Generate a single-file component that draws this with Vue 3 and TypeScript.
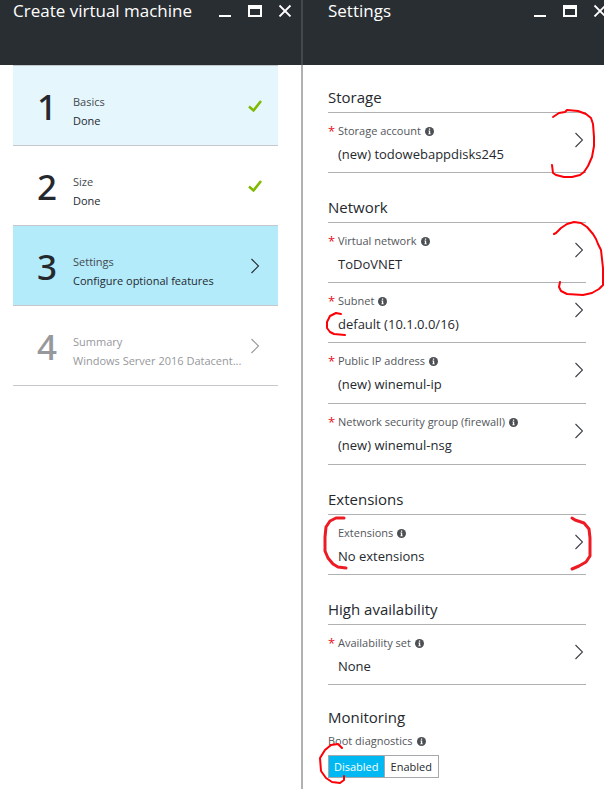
<script setup lang="ts">
import { ref } from 'vue'

interface Step {
  id: number
  title: string
  detail: string
  state: 'done' | 'active' | 'pending'
}

interface Field {
  label: string
  value: string
  required: boolean
  roomy?: boolean
}

interface Section {
  title: string
  fields: Field[]
}

const steps: Step[] = [
  { id: 1, title: 'Basics', detail: 'Done', state: 'done' },
  { id: 2, title: 'Size', detail: 'Done', state: 'done' },
  { id: 3, title: 'Settings', detail: 'Configure optional features', state: 'active' },
  { id: 4, title: 'Summary', detail: 'Windows Server 2016 Datacent...', state: 'pending' },
]

const sections: Section[] = [
  {
    title: 'Storage',
    fields: [{ label: 'Storage account', value: '(new) todowebappdisks245', required: true }],
  },
  {
    title: 'Network',
    fields: [
      { label: 'Virtual network', value: 'ToDoVNET', required: true },
      { label: 'Subnet', value: 'default (10.1.0.0/16)', required: true },
      { label: 'Public IP address', value: '(new) winemul-ip', required: true, roomy: true },
      { label: 'Network security group (firewall)', value: '(new) winemul-nsg', required: true, roomy: true },
    ],
  },
  {
    title: 'Extensions',
    fields: [{ label: 'Extensions', value: 'No extensions', required: false }],
  },
  {
    title: 'High availability',
    fields: [{ label: 'Availability set', value: 'None', required: true }],
  },
]

const blades = ['Create virtual machine', 'Settings']
const highlighted = ref(1)
const diagnostics = ref('Disabled')
</script>

<template>
  <main class="portal">
    <section v-for="(blade, index) in blades" :key="blade" class="blade">
      <header class="blade-header">
        <h1>{{ blade }}</h1>
        <div class="window-buttons">
          <button type="button" aria-label="Minimize">
            <svg width="14" height="14" viewBox="0 0 14 14"><path d="M1 13h12" stroke="#fff" stroke-width="2" /></svg>
          </button>
          <button type="button" aria-label="Maximize">
            <svg width="14" height="14" viewBox="0 0 14 14"><path fill="#fff" fill-rule="evenodd" d="M0 2h14v12H0zM2 6v6h10V6z" /></svg>
          </button>
          <button type="button" aria-label="Close">
            <svg width="14" height="14" viewBox="0 0 14 14"><path d="M1.5 2.5l11 11M12.5 2.5l-11 11" stroke="#fff" stroke-width="1.8" /></svg>
          </button>
        </div>
      </header>

      <ol v-if="index === 0" class="steps">
        <li v-for="step in steps" :key="step.id">
          <button
            type="button"
            class="step"
            :class="[step.state, { first: step.id === highlighted }]"
            :disabled="step.state === 'pending'"
          >
            <span class="number">{{ step.id }}</span>
            <span class="step-text">
              <span class="step-title">{{ step.title }}</span>
              <span class="step-detail">{{ step.detail }}</span>
            </span>
            <svg v-if="step.state === 'done'" class="mark" width="14" height="14" viewBox="0 0 14 14">
              <path d="M1 7.5l4.5 4 7.5-9.500" fill="none" stroke="#7fba00" stroke-width="2.5" />
            </svg>
            <svg v-else class="mark" width="14" height="16" viewBox="0 0 14 16">
              <path d="M3.500 1l7 7-7 7" fill="none" stroke="currentColor" stroke-width="1.1" />
            </svg>
          </button>
        </li>
      </ol>

      <div v-else class="settings">
        <section v-for="section in sections" :key="section.title">
          <h2>{{ section.title }}</h2>
          <button
            v-for="field in section.fields"
            :key="field.label"
            type="button"
            class="field"
            :class="{ roomy: field.roomy }"
          >
            <span class="star">{{ field.required ? '*' : '' }}</span>
            <span class="field-text">
              <span class="label">
                {{ field.label }}
                <svg class="info" width="9" height="9" viewBox="0 0 9 9">
                  <circle cx="4.5" cy="4.5" r="4.5" fill="#4c4f53" />
                  <path d="M3.9 1.5h1.3v1.2H3.9zM3.5 3.6h1.7v2.9h.6v.8H3.3v-.8h.6V4.4h-.4z" fill="#fff" />
                </svg>
              </span>
              <span class="value">{{ field.value }}</span>
            </span>
            <svg class="chevron" width="8" height="16" viewBox="0 0 8 16">
              <path d="M.5 1l7 7-7 7" fill="none" stroke="currentColor" stroke-width="1.1" />
            </svg>
          </button>
        </section>

        <section>
          <h2 class="plain">Monitoring</h2>
          <fieldset>
            <legend class="label">
              Boot diagnostics
              <svg class="info" width="9" height="9" viewBox="0 0 9 9">
                <circle cx="4.5" cy="4.5" r="4.5" fill="#4c4f53" />
                <path d="M3.9 1.5h1.3v1.2H3.9zM3.5 3.6h1.7v2.9h.6v.8H3.3v-.8h.6V4.4h-.4z" fill="#fff" />
              </svg>
            </legend>
            <div class="toggle">
              <label v-for="option in ['Disabled', 'Enabled']" :key="option" :class="{ on: diagnostics === option }">
                <input v-model="diagnostics" type="radio" name="diagnostics" :value="option" />{{ option }}
              </label>
            </div>
          </fieldset>
        </section>
      </div>
    </section>

    <svg class="ink" width="604" height="789" viewBox="0 0 604 789" aria-hidden="true">
      <g fill="none" stroke="#fb0007" stroke-width="2" stroke-linecap="round" stroke-linejoin="round">
        <path d="M553 117l6-4 6-1 2-2 11 1 8 3 5 4 2 6 1 13 0 9-2 11-4 9-4 6-4 3-8 2-8 0-8-2-3-2-1-8" />
        <path d="M554 234l2-1 5-5 6-4 7-2 7 1 6 4 6 7 3 5 2 5 3 6 2 18v17l-4 4-7 4-9 2-16-1-6-3-2-4 1-5" />
        <path d="M341 314l-5-1-6 3-3 6v6l3 4 4 2 11 1" />
        <path d="M342 748l-4-4-7 1-6 5-5 8 1 13 5 7 6 4 8 1 4-3 0-4" />
      </g>
      <g fill="none" stroke="#ed1c24" stroke-width="3" stroke-linecap="round" stroke-linejoin="round">
        <path d="M344 518h-8l-6 3-4 6-1 10 0 14 3 7 5 6 5 3 8 1" />
        <path d="M572 518l3 2 9 3 5 6 1 9v18l-4 6-7 4-7 3" />
      </g>
    </svg>
  </main>
</template>

<style>
body {
  overflow: hidden;
}
</style>

<style scoped>
.portal {
  position: relative;
  display: grid;
  grid-template-columns: 303px minmax(314px, 1fr);
  min-height: 100vh;
  overflow: hidden;
  background: #fff;
  color: #25292e;
  font-family: 'Segoe UI', 'Open Sans', 'Noto Sans', sans-serif;
  font-size: 11px;
}

.blade:first-child {
  box-shadow: inset -2px 0 #b1b1b3;
}

.blade-header {
  display: flex;
  justify-content: space-between;
  height: 65px;
  padding: 0 10px 0 25px;
  box-sizing: border-box;
  background: #292e33;
  color: #fff;
}

.blade:first-child .blade-header {
  padding: 0 9px 0 13px;
  border-right: 2px solid #44494d;
}

h1 {
  margin: 0;
  font-size: 17px;
  font-weight: 400;
  line-height: 22px;
}

.window-buttons {
  display: flex;
  gap: 16px;
  height: 16px;
  padding-top: 2px;
}

button {
  margin: 0;
  padding: 0;
  border: 0;
  background: none;
  color: inherit;
  font: inherit;
  text-align: left;
}

svg {
  display: block;
  flex: none;
}

.steps {
  margin: 0 25px 0 13px;
  padding: 0;
  list-style: none;
  border-top: 1px solid #c3c8cc;
}

.step {
  display: flex;
  align-items: center;
  width: 100%;
  height: 80px;
  padding: 0 16px 0 24px;
  box-sizing: border-box;
  border-bottom: 1px solid #c6c8cc;
}

.step.first {
  background: #e5f6fd;
}

.step.active {
  background: #b3ebfb;
}

.step.pending {
  color: #96989c;
}

.number {
  width: 36px;
  padding-top: 2px;
  font-family: 'Segoe UI', 'Noto Sans', 'Open Sans', sans-serif;
  font-size: 35px;
  font-weight: 500;
  line-height: 48px;
}

.step-text {
  display: flex;
  flex: 1;
  flex-direction: column;
  min-width: 0;
  padding-top: 10px;
  line-height: 19px;
  white-space: nowrap;
}

.step:not(.pending) .step-title {
  color: #45494e;
}

.settings {
  display: flex;
  flex-direction: column;
  gap: 14px;
  padding: 12px 31px 10px 25px;
}

h2 {
  height: 36px;
  margin: 0;
  padding-top: 5px;
  box-sizing: border-box;
  border-bottom: 1px solid #b1b1b3;
  font-size: 15px;
  font-weight: 400;
  line-height: 30px;
}

h2.plain {
  height: 32px;
  padding-top: 3px;
  border-bottom: 0;
}

.field {
  display: flex;
  width: 100%;
  height: 60px;
  padding: 8px 3px 0 0;
  box-sizing: border-box;
  border-bottom: 1px solid #b1b1b3;
}

.field.roomy {
  height: 61px;
}

.star {
  width: 10px;
  color: #e81123;
  font-size: 13px;
  line-height: 20px;
}

.field-text {
  display: flex;
  flex: 1;
  flex-direction: column;
  gap: 2px;
}

.label {
  display: flex;
  align-items: center;
  gap: 4px;
  color: #53565b;
  line-height: 20px;
}

.value {
  font-size: 13px;
  line-height: 22px;
}

.chevron {
  margin-top: 11px;
  color: #3c4045;
}

fieldset {
  margin: 0;
  padding: 0;
  border: 0;
}

legend {
  padding: 0;
}

.toggle {
  display: flex;
  width: fit-content;
  margin-top: 4px;
  border: 1px solid #a6a8ab;
}

.toggle label {
  position: relative;
  padding: 0 6px;
  line-height: 21px;
}

.toggle label.on {
  padding: 0 5px;
  border-right: 1px solid #a6a8ab;
  background: #00b9f2;
  color: #fff;
}

.toggle input {
  position: absolute;
  inset: 0;
  margin: 0;
  opacity: 0;
}

.ink {
  position: absolute;
  top: 0;
  left: 0;
  pointer-events: none;
}
</style>
